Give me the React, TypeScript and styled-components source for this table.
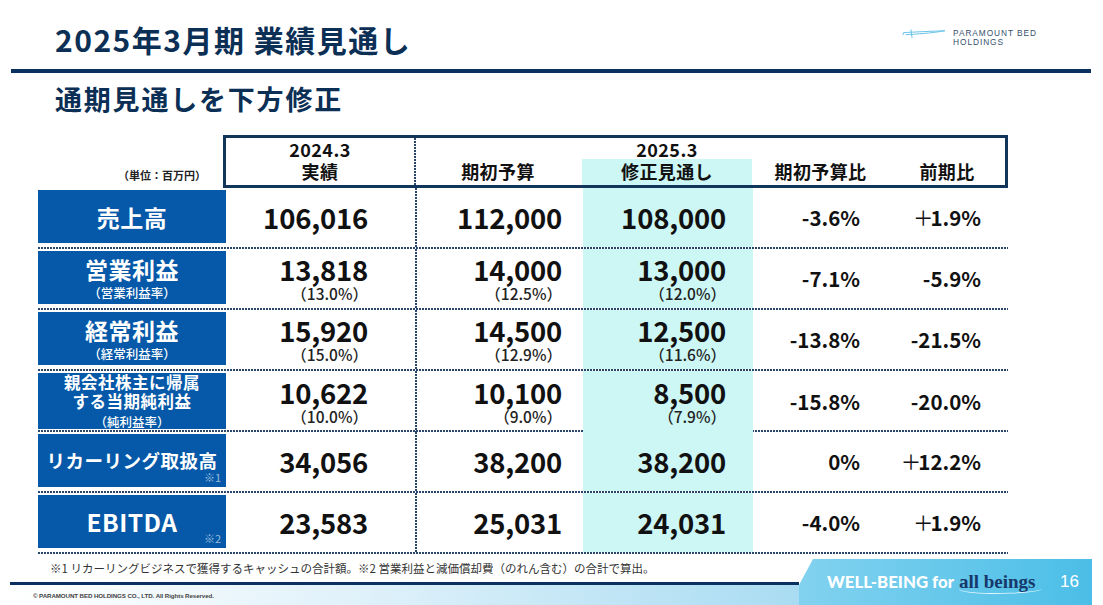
import styled, { createGlobalStyle, css } from 'styled-components';

const NAVY = '#0c2f55';
const BLUE = '#0559a8';
const CYAN = '#ccf7f4';
const DOT = '#2a476b';

const GlobalStyle = createGlobalStyle`
  html, body { margin: 0; padding: 0; background: #fff; }
  body { font-family: "Noto Sans CJK JP", "Noto Sans", sans-serif; color: #111; }
`;

const Page = styled.div`
  width: 1103px;
  height: 605px;
  overflow: hidden;
  display: flex;
  flex-direction: column;
  background: #fff;
`;

const Header = styled.header`
  height: 69px;
  display: flex;
  justify-content: space-between;
  align-items: flex-start;
`;

const Title = styled.h1`
  margin: 0;
  padding: 24px 0 0 55px;
  font-size: 30px;
  line-height: 30px;
  font-weight: 700;
  letter-spacing: 1.5px;
  color: ${NAVY};
`;

const Logo = styled.div`
  display: flex;
  align-items: flex-start;
  gap: 7px;
  margin: 29px 66px 0 0;
`;

const LogoText = styled.div`
  font-family: "Liberation Sans", Arial, sans-serif;
  font-size: 8.3px;
  line-height: 8.6px;
  letter-spacing: 0.95px;
  color: #35506e;
`;

const Rule = styled.div`
  height: 4px;
  margin: 0 12px 0 11px;
  background: #0b3160;
`;

const Subtitle = styled.h2`
  margin: 12px 0 0 55px;
  font-size: 27px;
  line-height: 27px;
  font-weight: 700;
  letter-spacing: 1.8px;
  color: ${NAVY};
`;

const Table = styled.div`
  margin: 23px 0 0 38px;
  width: 970px;
`;

const HeadRow = styled.div`
  display: flex;
  height: 53px;
`;

const UnitCell = styled.div`
  width: 186px;
  display: flex;
  align-items: flex-end;
  justify-content: flex-end;
  padding: 0 17px 5px 0;
  box-sizing: border-box;
  font-size: 11px;
  font-weight: 700;
  color: #222;
`;

const HeadBox = styled.div`
  flex: 1;
  display: grid;
  grid-template-columns: 188px 168px 170px 137px 116px;
  border: 3px solid #12355a;
`;

const dots = css<{ $divider?: boolean; $tint?: boolean }>`
  background-color: ${(p) => (p.$tint ? CYAN : 'transparent')};
  background-image: ${(p) =>
    p.$divider
      ? `linear-gradient(180deg, ${DOT} 2px, transparent 2px)`
      : 'none'};
  background-size: 2px 3px;
  background-position: left top;
  background-repeat: repeat-y;
`;

const HeadCell = styled.div<{ $divider?: boolean }>`
  ${dots};
  display: flex;
  flex-direction: column;
`;

const HeadYear = styled.div`
  height: 21px;
  padding-top: 2px;
  box-sizing: border-box;
  text-align: center;
  font-size: 18px;
  line-height: 19px;
  font-weight: 700;
  letter-spacing: 0.4px;
`;

const HeadMain = styled.div<{ $tint?: boolean }>`
  flex: 1;
  background: ${(p) => (p.$tint ? CYAN : 'transparent')};
  text-align: center;
  font-size: 18px;
  line-height: 24px;
  font-weight: 700;
  letter-spacing: 0.4px;
`;

const Row = styled.div`
  display: grid;
  grid-template-columns: 188px 189px 168px 170px 137px 118px;
  height: 61px;
  background-image: linear-gradient(90deg, ${DOT} 2px, transparent 2px);
  background-size: 3px 2px;
  background-position: left bottom;
  background-repeat: repeat-x;
`;

const LabelCell = styled.div`
  padding: 2px 0 6px;
`;

const LabelBox = styled.div`
  position: relative;
  height: 100%;
  background: ${BLUE};
  color: #fff;
  display: flex;
  flex-direction: column;
  align-items: center;
  justify-content: center;
`;

const LabelMain = styled.div<{ $size: number }>`
  font-size: ${(p) => p.$size}px;
  line-height: ${(p) => Math.round(p.$size * 1.15)}px;
  font-weight: 700;
  letter-spacing: 0.5px;
`;

const LabelSub = styled.div`
  font-size: 12.5px;
  line-height: 15px;
  font-weight: 500;
  margin-top: 3px;
`;

const Note = styled.span`
  position: absolute;
  right: 5px;
  bottom: 2px;
  font-size: 11px;
  color: rgba(255, 255, 255, 0.6);
`;

const ValueCell = styled.div<{ $pad: number; $tint?: boolean; $divider?: boolean }>`
  ${dots};
  margin-bottom: 2px;
  padding: 2px ${(p) => p.$pad}px 4px 0;
  display: flex;
  flex-direction: column;
  align-items: flex-end;
  justify-content: center;
`;

const Amount = styled.div`
  font-size: 27.5px;
  line-height: 30px;
  font-weight: 700;
  letter-spacing: -0.2px;
`;

const Ratio = styled.div`
  font-size: 15.5px;
  line-height: 18px;
  font-weight: 500;
  color: #222;
`;

const Change = styled.div`
  font-size: 20.5px;
  line-height: 24px;
  font-weight: 700;
  span {
    font-weight: 400;
    margin-right: -3px;
  }
`;

const Footer = styled.footer`
  flex: 1;
  display: flex;
`;

const FooterLeft = styled.div`
  flex: 1;
  display: flex;
  flex-direction: column;
  padding-left: 10px;
`;

const FootNote = styled.div`
  height: 28px;
  display: flex;
  align-items: center;
  padding-left: 40px;
  font-size: 11.5px;
  color: #333;
`;

const FooterRule = styled.div`
  height: 3px;
  background: #0b3160;
`;

const FooterBand = styled.div`
  flex: 1;
  display: flex;
  align-items: center;
  padding-left: 23px;
  background: linear-gradient(90deg, #ffffff 0%, #dff1fa 45%, #a9dcf2 100%);
`;

const Copyright = styled.div`
  font-family: "Liberation Sans", Arial, sans-serif;
  font-size: 6.2px;
  font-weight: 700;
  color: #444;
  letter-spacing: -0.1px;
`;

const Banner = styled.div`
  width: 293px;
  margin: 5px 11px 0 0;
  clip-path: polygon(14px 0, 100% 0, 100% 100%, 0 100%, 0 26px);
  background: linear-gradient(90deg, #82d2ef 0%, #4bbee7 100%);
  display: flex;
  align-items: center;
  padding: 0 13px 0 28px;
  box-sizing: border-box;
`;

const Slogan = styled.div`
  font-family: Lato, "Liberation Sans", sans-serif;
  font-size: 16.8px;
  font-weight: 900;
  color: #fff;
  white-space: nowrap;
`;

const SloganAccent = styled.span`
  position: relative;
  margin-left: 5px;
  font-family: "Liberation Serif", "Times New Roman", serif;
  font-size: 19px;
  font-weight: 700;
  color: #17386a;
  &::after {
    content: '';
    position: absolute;
    left: 0;
    right: -5px;
    bottom: -2px;
    height: 4px;
    border-bottom: 1.5px solid #eaf7fd;
    border-radius: 0 0 60% 40% / 0 0 100% 100%;
  }
`;

const PageNo = styled.div`
  margin-left: auto;
  font-family: "Liberation Sans", Arial, sans-serif;
  font-size: 17px;
  color: #fff;
`;

type RowData = {
  label: string[];
  size: number;
  sub?: string;
  note?: string;
  vals: string[];
  ratios?: string[];
  changes: string[];
};

const rows: RowData[] = [
  { label: ['売上高'], size: 23, vals: ['106,016', '112,000', '108,000'], changes: ['-3.6%', '＋1.9%'] },
  {
    label: ['営業利益'], size: 23, sub: '（営業利益率）',
    vals: ['13,818', '14,000', '13,000'], ratios: ['（13.0%）', '（12.5%）', '（12.0%）'],
    changes: ['-7.1%', '-5.9%'],
  },
  {
    label: ['経常利益'], size: 23, sub: '（経常利益率）',
    vals: ['15,920', '14,500', '12,500'], ratios: ['（15.0%）', '（12.9%）', '（11.6%）'],
    changes: ['-13.8%', '-21.5%'],
  },
  {
    label: ['親会社株主に帰属', 'する当期純利益'], size: 16.5, sub: '（純利益率）',
    vals: ['10,622', '10,100', '8,500'], ratios: ['（10.0%）', '（9.0%）', '（7.9%）'],
    changes: ['-15.8%', '-20.0%'],
  },
  { label: ['リカーリング取扱高'], size: 18.5, note: '※1', vals: ['34,056', '38,200', '38,200'], changes: ['0%', '＋12.2%'] },
  { label: ['EBITDA'], size: 24.5, note: '※2', vals: ['23,583', '25,031', '24,031'], changes: ['-4.0%', '＋1.9%'] },
];

const valuePads = [47, 21, 27];
const changePads = [30, 27];

function ChangeText({ text }: { text: string }) {
  if (text.startsWith('＋')) {
    return (
      <Change>
        <span>＋</span>
        {text.slice(1)}
      </Change>
    );
  }
  return <Change>{text}</Change>;
}

function LogoMark() {
  return (
    <svg width="44" height="10" viewBox="0 0 44 10" fill="none" stroke="#69c3ea" strokeWidth="1" strokeLinecap="round">
      <path d="M2 3.6 C 12 3, 30 2.2, 42.5 1.8" />
      <path d="M4 5.6 C 14 5.2, 30 4.2, 42.5 1.8" />
      <path d="M9 0.8 L10 8.6" />
      <path d="M2 3.6 L0.8 5.8" />
    </svg>
  );
}

export default function App() {
  return (
    <Page>
      <GlobalStyle />
      <Header>
        <Title>2025年3月期 業績見通し</Title>
        <Logo>
          <LogoMark />
          <LogoText>
            PARAMOUNT BED
            <br />
            HOLDINGS
          </LogoText>
        </Logo>
      </Header>
      <Rule />
      <Subtitle>通期見通しを下方修正</Subtitle>

      <Table>
        <HeadRow>
          <UnitCell>（単位：百万円）</UnitCell>
          <HeadBox>
            <HeadCell>
              <HeadYear>2024.3</HeadYear>
              <HeadMain>実績</HeadMain>
            </HeadCell>
            <HeadCell $divider>
              <HeadYear />
              <HeadMain>期初予算</HeadMain>
            </HeadCell>
            <HeadCell>
              <HeadYear>2025.3</HeadYear>
              <HeadMain $tint>修正見通し</HeadMain>
            </HeadCell>
            <HeadCell>
              <HeadYear />
              <HeadMain>期初予算比</HeadMain>
            </HeadCell>
            <HeadCell>
              <HeadYear />
              <HeadMain>前期比</HeadMain>
            </HeadCell>
          </HeadBox>
        </HeadRow>

        {rows.map((r) => (
          <Row key={r.label.join('')}>
            <LabelCell>
              <LabelBox>
                {r.label.map((l) => (
                  <LabelMain key={l} $size={r.size}>{l}</LabelMain>
                ))}
                {r.sub && <LabelSub>{r.sub}</LabelSub>}
                {r.note && <Note>{r.note}</Note>}
              </LabelBox>
            </LabelCell>
            {r.vals.map((v, i) => (
              <ValueCell key={i} $pad={valuePads[i]} $divider={i === 1} $tint={i === 2}>
                <Amount>{v}</Amount>
                {r.ratios && <Ratio>{r.ratios[i]}</Ratio>}
              </ValueCell>
            ))}
            {r.changes.map((c, i) => (
              <ValueCell key={'c' + i} $pad={changePads[i]}>
                <ChangeText text={c} />
              </ValueCell>
            ))}
          </Row>
        ))}
      </Table>

      <Footer>
        <FooterLeft>
          <FootNote>
            ※1 リカーリングビジネスで獲得するキャッシュの合計額。※2 営業利益と減価償却費（のれん含む）の合計で算出。
          </FootNote>
          <FooterRule />
          <FooterBand>
            <Copyright>© PARAMOUNT BED HOLDINGS CO., LTD. All Rights Reserved.</Copyright>
          </FooterBand>
        </FooterLeft>
        <Banner>
          <Slogan>
            WELL-BEING for<SloganAccent>all beings</SloganAccent>
          </Slogan>
          <PageNo>16</PageNo>
        </Banner>
      </Footer>
    </Page>
  );
}
